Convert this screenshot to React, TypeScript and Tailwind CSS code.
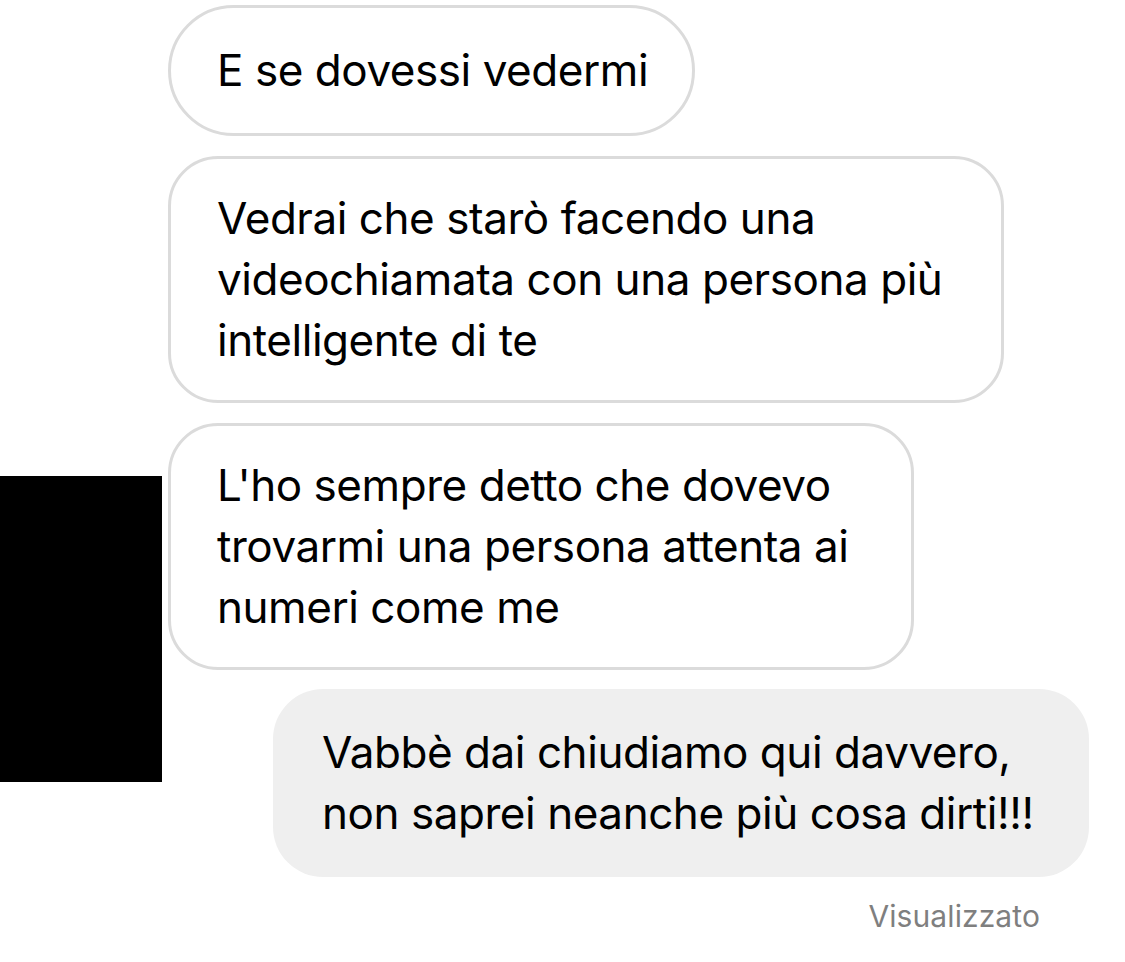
import React from 'react'

const incoming = [
  { lines: ['E se dovessi vedermi'], width: 'w-[527px]', pill: true },
  {
    lines: ['Vedrai che starò facendo una', 'videochiamata con una persona più', 'intelligente di te'],
    width: 'w-[836px]',
    pill: false,
  },
  {
    lines: ["L'ho sempre detto che dovevo", 'trovarmi una persona attenta ai', 'numeri come me'],
    width: 'w-[746px]',
    pill: false,
  },
]

export default function App() {
  return (
    <div
      className="relative w-[1125px] h-[962px] bg-white text-black overflow-hidden"
      style={{ fontFamily: 'Inter, "Noto Sans", sans-serif' }}
    >
      {/* redacted avatar */}
      <div className="absolute left-0 top-[476px] w-[162px] h-[306px] bg-black" />

      <div className="flex flex-col pt-[5px]">
        {incoming.map((msg, i) => (
          <div
            key={i}
            className={`${msg.width} ml-[168px] mb-[20px] border-[3px] border-[#dbdbdb] bg-white pl-[46px] pr-4 ${
              msg.pill ? 'rounded-[66px] py-[32px]' : 'rounded-[50px] py-[29px]'
            } text-[44px] leading-[61px] tracking-[-0.45px]`}
          >
            {msg.lines.map((l, j) => (
              <div key={j}>{l}</div>
            ))}
          </div>
        ))}

        <div className="self-end mr-[36px] -mt-[1px] w-[816px] rounded-[50px] bg-[#efefef] pl-[49px] py-[33px] text-[44px] leading-[61px] tracking-[-0.45px]">
          <div>Vabbè dai chiudiamo qui davvero,</div>
          <div>non saprei neanche più cosa dirti!!!</div>
        </div>

        <div className="self-end mr-[85px] mt-[22px] text-[30px] leading-[34px] tracking-[0.1px] text-[#7f7f7f]">
          Visualizzato
        </div>
      </div>
    </div>
  )
}
